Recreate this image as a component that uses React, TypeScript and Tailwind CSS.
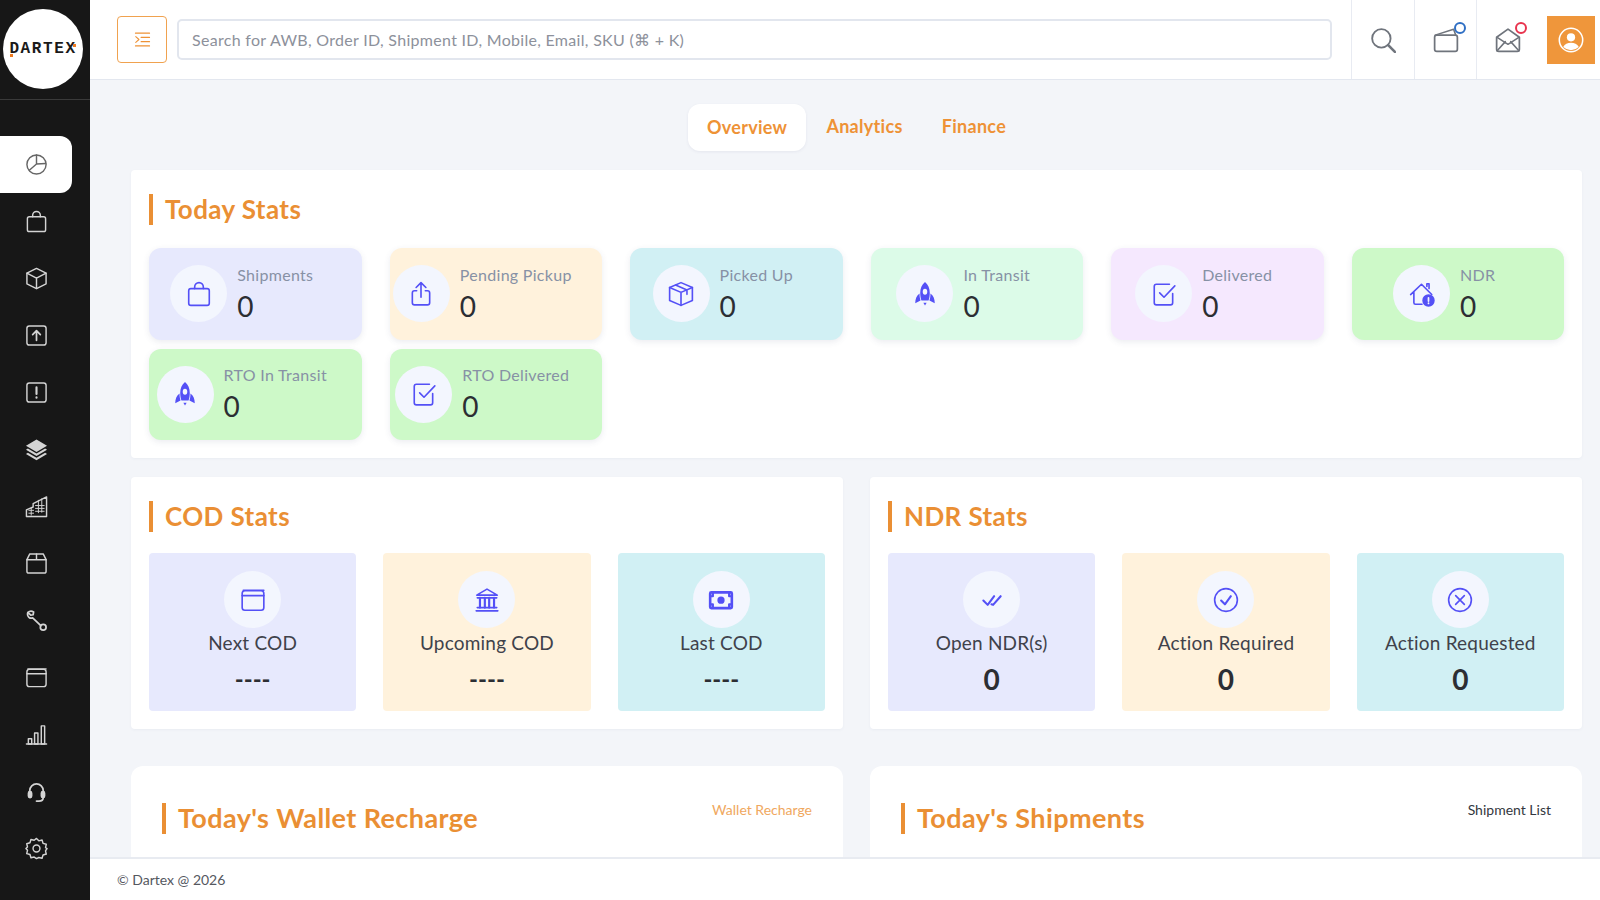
import type { ReactNode } from "react";

const font = { fontFamily: "Lato, 'Noto Sans', sans-serif" };

const Svg = ({ children, className = "", sw = 1.5 }: { children: ReactNode; className?: string; sw?: number }) => (
  <svg viewBox="0 0 24 24" fill="none" stroke="currentColor" strokeWidth={sw} strokeLinecap="round" strokeLinejoin="round" className={className}>
    {children}
  </svg>
);

const icons: Record<string, ReactNode> = {
  pie: (<><circle cx="12" cy="12" r="10" /><path d="M12 2v9.5L21.5 11M12 11.5 4.5 18" /></>),
  bag: (<><rect x="2.5" y="7" width="19" height="15.5" rx="2" /><path d="M8 7V5.5a4 4 0 0 1 8 0V7" /></>),
  cube: (<><path d="M12 1.5 22 6.5v11L12 22.5 2 17.5v-11z" /><path d="M2 6.5 12 11.5l10-5M12 11.5v11" /></>),
  upload: (<><rect x="2" y="2" width="20" height="20" rx="2.5" /><path d="M12 17V7.5M8 11l4-4 4 4" strokeWidth={1.8} /></>),
  alert: (<><rect x="2" y="2" width="20" height="20" rx="2.5" /><path d="M12 6.5v7M12 17v.4" strokeWidth={2.2} /></>),
  layers: (<g fill="currentColor" stroke="none"><path d="M12 1.5 23 8l-11 6.5L1 8z" /><path d="M3 11l9 5.3 9-5.3 2 1.3-11 6.5L1 12.3z" /><path d="M3 15.4l9 5.3 9-5.3 2 1.3L12 23.2 1 16.7z" /></g>),
  building: (<><path d="M1.5 22.5v-7l7-3V9l14-7v20.5z" /><path d="M1.5 22.5h21M11 11h9M11 14h9M11 17h9M14 5.5v13M17.5 4v14M4 16h5M4 19h5M6.5 14v7" strokeWidth={1} /></>),
  box: (<><path d="M5 2h14l3 6v12a2 2 0 0 1-2 2H4a2 2 0 0 1-2-2V8z" /><path d="M2 8h20M12 2v6" /></>),
  wrench: (<><path d="M3 3.5 6 6.5l2.5-.5L9 3a5 5 0 0 0-6 .5 5 5 0 0 0 0 3.5c.8 2 3 3 5 2.3l8.5 8" strokeWidth={1.8} /><circle cx="19" cy="19" r="3" strokeWidth={1.8} /></>),
  window: (<><rect x="2" y="3.5" width="20" height="18" rx="2.5" /><path d="M2 8h20M3 3h19" /></>),
  signal: (<><path d="M1.5 22h21" /><rect x="3.5" y="16.5" width="3.5" height="5.5" /><rect x="10" y="10.5" width="3.5" height="11.5" /><rect x="17" y="3" width="3.5" height="19" /></>),
  headset: (<><path d="M5 14v-3a7 7 0 0 1 14 0v3" strokeWidth={1.8} /><rect x="3.5" y="12" width="3.5" height="6.5" rx="1.7" fill="currentColor" /><rect x="17" y="12" width="3.5" height="6.5" rx="1.7" fill="currentColor" /><path d="M19 18.5c0 2.2-2 3.5-4.5 3.5H12" strokeWidth={1.8} /></>),
  gear: (<><circle cx="12" cy="12" r="3.6" /><path d="M12 1.5l2.4 2.5 3.4-.8 1 3.4 3.4 1-.8 3.4L23 12l-1.6 2.4.8 3.4-3.4 1-1 3.4-3.4-.8L12 22.5l-2.4-1.6-3.4.8-1-3.4-3.4-1 .8-3.4L1 12l1.6-1.6-.8-3.4 3.4-1 1-3.4 3.4.8z" /></>),
  share: (<><path d="M8 9H6a2 2 0 0 0-2 2v9a2 2 0 0 0 2 2h12a2 2 0 0 0 2-2v-9a2 2 0 0 0-2-2h-2" /><path d="M12 15V2M7.5 6 12 1.5 16.5 6" /></>),
  carton: (<><path d="M12 1.5 22.5 6v12L12 22.5 1.5 18V6z" /><path d="M1.5 6 12 10.5 22.5 6M12 10.5v12M7 3.8l10.5 4.5v4" /></>),
  rocket: (<g fill="currentColor" stroke="none"><path fillRule="evenodd" d="M12 1c3 2.5 4.4 6 4.4 10 0 2.500-.4 5-1.100 7H8.700C8 16 7.600 13.500 7.600 11 7.600 7 9 3.500 12 1zm0 6.200a2.100 2.800 0 1 0 0 5.600 2.100 2.800 0 0 0 0-5.600z" /><path d="M7 11.500c-.1 2.300.3 4.700.9 6.500L3 20.500c0-4 1.200-7 4-9zM17 11.500c.1 2.300-.3 4.700-.9 6.500l4.900 2.500c0-4-1.200-7-4-9z" /><path d="M10.500 20h3l-1.500 2.500z" /></g>),
  check: (<><path d="M20 11.500V20a2 2 0 0 1-2 2H5a2 2 0 0 1-2-2V5a2 2 0 0 1 2-2h12" /><path d="M8 11l4 4 10-10.500" /></>),
  home: (<><path d="M1.500 12.500 11.500 3l9.500 9.500M4.500 10.500V20a1.500 1.500 0 0 0 1.500 1.500h6M16.500 5V2.500h2v4.500" /><circle cx="18" cy="18" r="5" fill="currentColor" /><path d="M18 15.500v3M18 20.500v.2" stroke="#f3f6fe" strokeWidth={1.6} /></>),
  bank: (<><path d="M12 2 2.500 7.500h19zM3 10h18M3 19h18M2 22h20" /><path d="M5.500 10v9M10 10v9M14 10v9M18.500 10v9" strokeWidth={2} /></>),
  cash: (<g><rect x="2" y="5" width="20" height="14.500" rx="1" strokeWidth={2.4} /><circle cx="12" cy="12.200" r="2.600" fill="currentColor" /><path d="M2.500 8.500h2v-3M21.500 8.500h-2v-3M2.500 16h2v3M21.500 16h-2v3" strokeWidth={2} /></g>),
  doublecheck: (<path d="M4 12.500 8 16.500 14 8.500M11.500 16 13 16.500 20 8.500" strokeWidth={1.9} />),
  circleCheck: (<><circle cx="12" cy="12" r="10.500" /><path d="M7.500 12.500 11 16l5.500-7.500" strokeWidth={1.9} /></>),
  circleX: (<><circle cx="12" cy="12" r="10.500" /><path d="M8 8l8 8M16 8l-8 8" /></>),
  search: (<><circle cx="10.500" cy="10.500" r="8.500" strokeWidth={1.700} /><path d="M16.800 16.800 23 23" strokeWidth={2.400} /></>),
  wallet: (<><rect x="1.500" y="7.500" width="21" height="15" rx="2" strokeWidth={1.600} /><path d="M2 7.500 19 2l2 5.500" strokeWidth={1.400} /></>),
  mailOpen: (<><path d="M1.500 9.500 12 2l10.500 7.500V20.500a2 2 0 0 1-2 2h-17a2 2 0 0 1-2-2z" strokeWidth={1.600} /><path d="M2 9.500 12 16l10-6.500M2 22l7.500-8.500M22 22l-7.500-8.500" strokeWidth={1.400} /></>),
  indent: (<path d="M2 3h20M10 9h12M10 15h12M2 21h20M2.500 8l4.500 4-4.500 4" />),
};

const navItems = ["pie", "bag", "cube", "upload", "alert", "layers", "building", "box", "wrench", "window", "signal", "headset", "gear"];

const todayStats = [
  { label: "Shipments", icon: "bag", bg: "bg-[#e7e9fd]" },
  { label: "Pending Pickup", icon: "share", bg: "bg-[#fff2dc]" },
  { label: "Picked Up", icon: "carton", bg: "bg-[#d1f0f4]" },
  { label: "In Transit", icon: "rocket", bg: "bg-[#dcfbe8]" },
  { label: "Delivered", icon: "check", bg: "bg-[#f5e8fe]" },
  { label: "NDR", icon: "home", bg: "bg-[#cdf9c8]" },
  { label: "RTO In Transit", icon: "rocket", bg: "bg-[#cdf9c8]" },
  { label: "RTO Delivered", icon: "check", bg: "bg-[#cdf9c8]" },
];

const codStats = [
  { label: "Next COD", icon: "window", bg: "bg-[#e7e9fd]" },
  { label: "Upcoming COD", icon: "bank", bg: "bg-[#fff2dc]" },
  { label: "Last COD", icon: "cash", bg: "bg-[#d1f0f4]" },
];

const ndrStats = [
  { label: "Open NDR(s)", icon: "doublecheck", bg: "bg-[#e7e9fd]" },
  { label: "Action Required", icon: "circleCheck", bg: "bg-[#fff2dc]" },
  { label: "Action Requested", icon: "circleX", bg: "bg-[#d1f0f4]" },
];

const Title = ({ text, large }: { text: string; large?: boolean }) => (
  <div className={`flex items-center border-l-[4px] border-[#ea8f34] pl-[12px] h-[31px] ${large ? "text-[27px]" : "text-[26px]"} font-bold text-[#ea8f34] tracking-[0.4px]`}>
    {text}
  </div>
);

const StatCard = ({ label, icon, bg }: { label: string; icon: string; bg: string }) => (
  <div className={`${bg} h-[91.5px] rounded-[12px] shadow-[0_2px_6px_rgba(60,70,110,0.1)] flex items-center justify-center`}>
    <div className="w-[57px] h-[57px] shrink-0 rounded-full bg-[#f3f6fe] flex items-center justify-center text-[#5450f6]">
      <Svg className="w-[26px] h-[26px]">{icons[icon]}</Svg>
    </div>
    <div className="ml-[10px] pr-[27px] flex flex-col">
      <span className="text-[16px] leading-[22px] text-[#8791a5] tracking-[0.3px] whitespace-nowrap">{label}</span>
      <span className="text-[28px] leading-[36px] mt-[2px] text-[#2c2e33]">0</span>
    </div>
  </div>
);

const BigStat = ({ label, icon, bg, value }: { label: string; icon: string; bg: string; value: string }) => (
  <div className={`${bg} h-[158px] rounded-[4px] flex flex-col items-center pt-[18px]`}>
    <div className="w-[57px] h-[57px] rounded-full bg-[#f3f6fe] flex items-center justify-center text-[#5450f6]">
      <Svg className="w-[26px] h-[26px]">{icons[icon]}</Svg>
    </div>
    <span className="mt-[2px] text-[19px] leading-[26px] text-[#3f424b] tracking-[0.2px]">{label}</span>
    <span className={`mt-[5px] leading-[36px] font-bold text-[#2c2e33] ${value === "0" ? "text-[28px]" : "text-[24px]"}`}>{value}</span>
  </div>
);

const App = () => {
  return (
    <div className="flex h-[900px] w-[1600px] overflow-hidden bg-[#f3f5f9]" style={font}>
      {/* Sidebar */}
      <aside className="w-[90px] shrink-0 bg-[#171717] flex flex-col">
        <div className="h-[100px] shrink-0 border-b border-[#3a3a3a] pl-[3px] pt-[9px]">
          <div className="relative w-[80px] h-[80px] rounded-full bg-white flex items-center justify-center">
            <span className="text-[16px] font-bold text-[#1a1a1a] tracking-[1.6px]" style={{ fontFamily: "'Liberation Mono', monospace" }}>DARTEX</span>
            <span className="absolute left-[7px] top-[45px] w-[3px] h-[3px] bg-[#ee7a20]" />
            <span className="absolute right-[7px] top-[35px] w-[3px] h-[3px] bg-[#ee7a20]" />
          </div>
        </div>
        <nav className="mt-[36px] flex flex-col">
          {navItems.map((name, i) => (
            <div key={name} className={`w-[72px] h-[57px] flex items-center justify-center rounded-r-[12px] ${i === 0 ? "bg-white text-[#666]" : "text-[#d4d4d4]"}`}>
              <Svg className="w-[23px] h-[23px]">{icons[name]}</Svg>
            </div>
          ))}
        </nav>
      </aside>

      <div className="flex-1 min-w-0 flex flex-col">
        {/* Header */}
        <header className="h-[80px] shrink-0 bg-white border-b border-[#e3e7ef] flex items-stretch">
          <div className="flex-1 flex items-center pl-[27px] pr-[19px] gap-[10px]">
            <button className="w-[50px] h-[47px] shrink-0 border border-[#f0a24f] rounded-[4px] flex items-center justify-center text-[#ee9236]">
              <Svg className="w-[17px] h-[17px]">{icons.indent}</Svg>
            </button>
            <div className="flex-1 h-[41px] border-2 border-[#e2e6ee] rounded-[5px] flex items-center pl-[13px] text-[16px] text-[#8d919b] tracking-[0.3px]">
              Search for AWB, Order ID, Shipment ID, Mobile, Email, SKU (⌘ + K)
            </div>
          </div>
          <div className="w-[63px] border-l border-[#e8ebf2] flex items-center justify-center text-[#6f747c]">
            <Svg className="w-[26px] h-[26px]">{icons.search}</Svg>
          </div>
          <div className="w-[62px] border-l border-[#e8ebf2] flex items-center justify-center text-[#6f747c]">
            <div className="relative">
              <Svg className="w-[26px] h-[26px]">{icons.wallet}</Svg>
              <span className="absolute -right-[7px] -top-[5px] w-[12px] h-[12px] rounded-full border-[2.5px] border-[#2f6fc4] bg-white" />
            </div>
          </div>
          <div className="w-[71px] border-l border-[#e8ebf2] flex items-center pl-[18px] text-[#6f747c]">
            <div className="relative">
              <Svg className="w-[26px] h-[26px]">{icons.mailOpen}</Svg>
              <span className="absolute -right-[6px] -top-[5px] w-[12px] h-[12px] rounded-full border-[2.5px] border-[#e8344e] bg-white" />
            </div>
          </div>
          <div className="w-[53px] flex items-center">
            <div className="w-[48px] h-[48px] bg-[#ef963b] flex items-center justify-center text-white">
              <svg viewBox="0 0 24 24" fill="none" stroke="currentColor" strokeWidth={1.4} className="w-[26px] h-[26px]">
                <circle cx="12" cy="12" r="10.800" />
                <circle cx="12" cy="9.500" r="3.800" fill="currentColor" stroke="none" />
                <path d="M4.800 18.500c1.500-3 4-4 7.200-4s5.700 1 7.200 4a10.500 10.500 0 0 1-14.400 0z" fill="currentColor" stroke="none" />
              </svg>
            </div>
          </div>
        </header>

        {/* Page content */}
        <main className="flex-1 min-h-0 overflow-hidden pl-[41px] pr-[18px]">
          <div className="flex justify-center mt-[24px] text-[18px] font-bold text-[#ee9236] tracking-[0.3px]">
            <div className="h-[47px] px-[19px] bg-white rounded-[12px] shadow-[0_1px_3px_rgba(60,70,110,0.08)] flex items-center">Overview</div>
            <div className="h-[47px] px-[20px] flex items-center -mt-[1px]">Analytics</div>
            <div className="h-[47px] px-[19px] flex items-center -mt-[1px]">Finance</div>
          </div>

          <section className="mt-[19px] bg-white rounded-[4px] shadow-[0_1px_3px_rgba(60,70,110,0.05)] px-[18px] pt-[24px] pb-[18px]">
            <Title text="Today Stats" />
            <div className="mt-[23px] grid grid-cols-6 gap-x-[28px] gap-y-[9px]">
              {todayStats.map((s) => (
                <StatCard key={s.label} {...s} />
              ))}
            </div>
          </section>

          <div className="mt-[19px] grid grid-cols-2 gap-[27px]">
            {[{ title: "COD Stats", items: codStats, value: "----" }, { title: "NDR Stats", items: ndrStats, value: "0" }].map((group) => (
              <section key={group.title} className="bg-white rounded-[4px] shadow-[0_1px_3px_rgba(60,70,110,0.05)] px-[18px] pt-[24px] pb-[18px]">
                <Title text={group.title} />
                <div className="mt-[21px] grid grid-cols-3 gap-[27px]">
                  {group.items.map((s) => (
                    <BigStat key={s.label} {...s} value={group.value} />
                  ))}
                </div>
              </section>
            ))}
          </div>

          <div className="mt-[37px] grid grid-cols-2 gap-[27px]">
            <section className="h-[120px] bg-white rounded-[12px] pl-[31px] pr-[31px] pt-[37px] flex justify-between items-start">
              <Title text="Today's Wallet Recharge" large />
              <a className="text-[14px] leading-[18px] -mt-[2px] text-[#f0a860]">Wallet Recharge</a>
            </section>
            <section className="h-[120px] bg-white rounded-[12px] pl-[31px] pr-[31px] pt-[37px] flex justify-between items-start">
              <Title text="Today's Shipments" large />
              <a className="text-[14px] leading-[18px] -mt-[2px] text-[#333740]">Shipment List</a>
            </section>
          </div>
        </main>

        {/* Footer */}
        <footer className="h-[43px] shrink-0 bg-white border-t-2 border-[#e8ebf1] flex items-center pl-[27px] text-[14px] text-[#55585f]">
          © Dartex @ 2026
        </footer>
      </div>
    </div>
  );
};

export default App;
